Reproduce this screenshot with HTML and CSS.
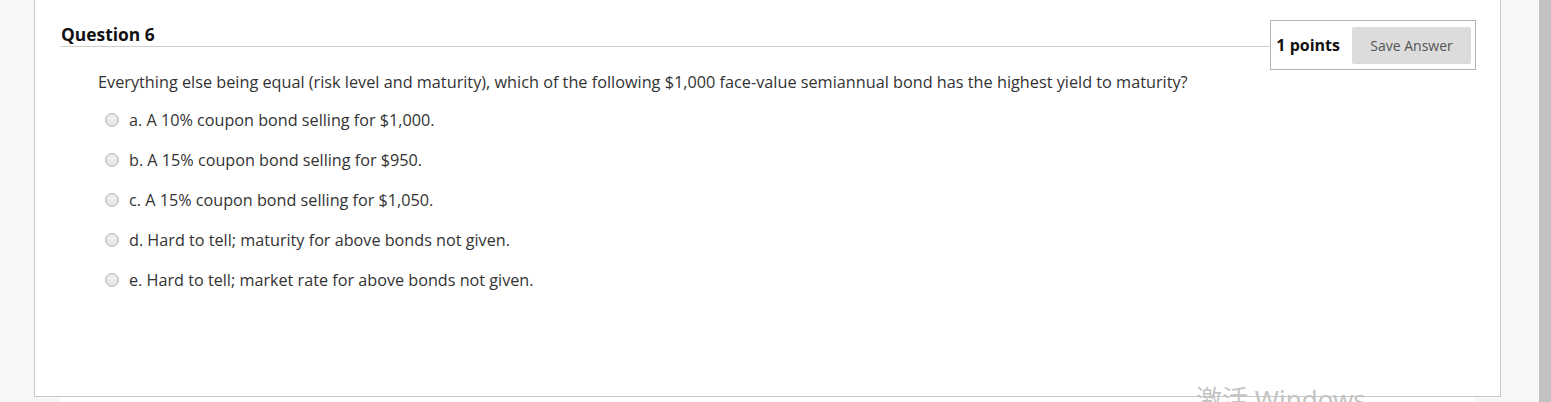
FILE: index.html
```html
<!DOCTYPE html>
<html>
<head>
<meta charset="utf-8">
<link rel="stylesheet" href="styles.css">
</head>
<body>
<div class="page">
  <div class="main">
    <div class="card">
      <div class="header">
        <div class="title"><h2>Question 6</h2></div>
        <div class="points">
          <span class="pts">1 points</span>
          <button class="save">Save Answer</button>
        </div>
      </div>
      <div class="body">
        <p class="question">Everything else being equal (risk level and maturity), which of the following $1,000 face-value semiannual bond has the highest yield to maturity?</p>
        <ul class="options">
          <li><span class="radio"></span><span>a. A 10% coupon bond selling for $1,000.</span></li>
          <li><span class="radio"></span><span>b. A 15% coupon bond selling for $950.</span></li>
          <li><span class="radio"></span><span>c. A 15% coupon bond selling for $1,050.</span></li>
          <li><span class="radio"></span><span>d. Hard to tell; maturity for above bonds not given.</span></li>
          <li><span class="radio"></span><span>e. Hard to tell; market rate for above bonds not given.</span></li>
        </ul>
      </div>
    </div>
    <div class="strip"></div>
    <div class="watermark">激活 Windows</div>
  </div>
  <div class="scrollbar"></div>
</div>
</body>
</html>
```
FILE: styles.css
```css
html, body {
  margin: 0;
  padding: 0;
  height: 402px;
  overflow: hidden;
  background: #f7f7f7;
  font-family: "Open Sans", "Noto Sans", sans-serif;
  color: #333;
}
.page {
  display: flex;
  height: 402px;
}
.main {
  position: relative;
  width: 1539px;
  padding-left: 34px;
  box-sizing: border-box;
}
.card {
  width: 1467px;
  height: 397px;
  box-sizing: border-box;
  background: #fff;
  border: 1px solid #c8c8c8;
  border-top: none;
  padding: 0 24px 0 25px;
}
.strip {
  margin-left: 26px;
  width: 1414px;
  height: 5px;
  background: #fff;
}
.header {
  display: flex;
  align-items: flex-start;
}
.title {
  flex: 1;
  height: 47px;
  border-bottom: 1px solid #cfcfcf;
  box-sizing: border-box;
}
.title h2 {
  margin: 0;
  padding: 23px 0 0 1px;
  font-size: 17.4px;
  line-height: 22px;
  font-weight: 700;
  color: #111;
}
.points {
  margin-top: 20px;
  height: 50px;
  box-sizing: border-box;
  border: 1px solid #b3b3b3;
  display: flex;
  align-items: center;
  padding: 0 4px 0 5px;
  gap: 12px;
}
.pts {
  font-size: 16px;
  font-weight: 700;
  color: #111;
}
.save {
  width: 119px;
  height: 37px;
  border: none;
  border-radius: 2px;
  background: #dcdcdc;
  color: #555;
  font-family: "Open Sans", "Noto Sans", sans-serif;
  font-size: 14px;
  padding: 0;
}
.body {
  padding-left: 38px;
}
.question {
  margin: 0;
  font-size: 16.25px;
  line-height: 24px;
}
.options {
  list-style: none;
  margin: 6px 0 0 0;
  padding: 0 0 0 7px;
}
.options li {
  display: flex;
  align-items: center;
  height: 40px;
  font-size: 16.2px;
  gap: 10px;
}
.radio {
  width: 14px;
  height: 14px;
  box-sizing: border-box;
  border-radius: 50%;
  border: 1px solid #b9b9b9;
  background: radial-gradient(circle at 50% 35%, #f4f4f4 0%, #e2e2e2 70%, #d6d6d6 100%);
}
.watermark {
  position: absolute;
  left: 1196px;
  top: 379px;
  font-family: "Noto Sans", "Noto Sans CJK SC", sans-serif;
  font-size: 26px;
  color: #c4c4c4;
  white-space: nowrap;
}
.scrollbar {
  width: 12px;
  background: #c1c1c1;
}
```
